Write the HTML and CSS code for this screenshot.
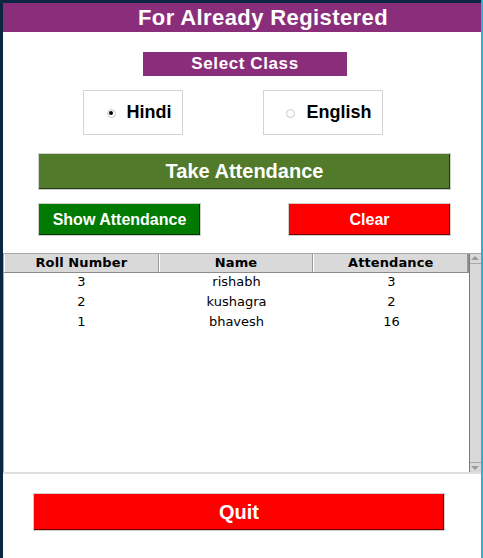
FILE: index.html
```html
<!DOCTYPE html>
<html>
<head>
<meta charset="utf-8">
<link rel="stylesheet" href="styles.css">
</head>
<body>
<div class="window">
  <div class="title">For Already Registered</div>
  <div class="select-class">Select Class</div>
  <div class="radio-row">
    <label class="radio-box hindi"><span class="radio checked"></span><span class="radio-text">Hindi</span></label>
    <label class="radio-box english"><span class="radio"></span><span class="radio-text">English</span></label>
  </div>
  <div class="btn take">Take Attendance</div>
  <div class="btn-row">
    <div class="btn show">Show Attendance</div>
    <div class="btn clear">Clear</div>
  </div>
  <div class="tree">
    <div class="tree-main">
      <div class="thead">
        <div class="th">Roll Number</div>
        <div class="th">Name</div>
        <div class="th">Attendance</div>
      </div>
      <div class="tr"><div class="td">3</div><div class="td">rishabh</div><div class="td">3</div></div>
      <div class="tr"><div class="td">2</div><div class="td">kushagra</div><div class="td">2</div></div>
      <div class="tr"><div class="td">1</div><div class="td">bhavesh</div><div class="td">16</div></div>
    </div>
    <div class="scrollbar">
      <div class="arrow up"></div>
      <div class="trough"></div>
      <div class="arrow down"></div>
    </div>
  </div>
  <div class="btn quit">Quit</div>
</div>
</body>
</html>
```

FILE: styles.css
```css
html, body {
  margin: 0;
  padding: 0;
}
body {
  width: 483px;
  height: 558px;
  overflow: hidden;
  background: linear-gradient(to right, #0c2540 0, #0c2540 481px, #22b5d5 481px, #22b5d5 483px);
  font-family: "Liberation Sans", Arial, sans-serif;
}
.window {
  margin: 3px 0 0 3px;
  width: 478px;
  height: 555px;
  background: #ffffff;
  display: flex;
  flex-direction: column;
}
.title {
  height: 29px;
  background: #8a2e7b;
  color: #ffffff;
  font-weight: bold;
  font-size: 22px;
  letter-spacing: 0.4px;
  line-height: 29px;
  text-align: center;
  padding-left: 42px;
}
.select-class {
  margin: 20px 0 0 140px;
  width: 204px;
  height: 24px;
  background: #8a2e7b;
  color: #ffffff;
  font-weight: bold;
  font-size: 17px;
  letter-spacing: 0.6px;
  line-height: 24px;
  text-align: center;
}
.radio-row {
  margin: 14px 0 0 80px;
  display: flex;
  gap: 80px;
}
.radio-box {
  box-sizing: border-box;
  height: 45px;
  border: 1px solid #d4d4d4;
  display: flex;
  align-items: center;
  justify-content: center;
  gap: 11px;
}
.hindi { width: 100px; padding-left: 12px; }
.english { width: 120px; padding-left: 12px; }
.radio {
  box-sizing: border-box;
  width: 9px;
  height: 9px;
  border-radius: 50%;
  border: 1px solid #c8c8c8;
  background: #fff;
  position: relative;
  margin-top: 1px;
  flex: none;
}
.radio.checked::after {
  content: "";
  position: absolute;
  left: 1.5px;
  top: 1.5px;
  width: 4px;
  height: 4px;
  border-radius: 50%;
  background: #000;
}
.radio-text {
  font-weight: bold;
  font-size: 18px;
  color: #000;
}
.btn {
  box-sizing: border-box;
  border: 1px solid #cfcfcf;
  box-shadow: inset -1px -1px 0 rgba(0, 0, 0, 0.55);
  color: #ffffff;
  font-weight: bold;
  text-align: center;
}
.take {
  margin: 18px 0 0 35px;
  width: 413px;
  height: 37px;
  background: #517a2b;
  font-size: 20px;
  line-height: 35px;
}
.btn-row {
  margin: 13px 0 0 35px;
  width: 413px;
  display: flex;
  justify-content: space-between;
}
.show, .clear {
  width: 163px;
  height: 33px;
  font-size: 16px;
  line-height: 31px;
}
.show { background: #007a00; }
.clear { background: #ff0000; }
.tree {
  margin-top: 17px;
  height: 221px;
  display: flex;
  border-top: 1px solid #a8a8a8;
  border-bottom: 2px solid #e0e0e0;
  box-sizing: border-box;
}
.tree-main {
  flex: 1;
  border-left: 1px solid #a8a8a8;
  font-family: "DejaVu Sans", sans-serif;
  font-size: 13px;
}
.thead {
  display: flex;
  height: 18px;
  background: #d9d9d9;
  border-bottom: 1px solid #8c8c8c;
  border-right: 1px solid #8c8c8c;
}
.th {
  flex: 1;
  font-weight: bold;
  text-align: center;
  line-height: 18px;
  letter-spacing: 0.1px;
  border-left: 1px solid #ffffff;
  border-right: 1px solid #9a9a9a;
  color: #000;
}
.tr {
  display: flex;
  height: 20px;
  line-height: 18px;
}
.tr:first-of-type {
  margin-top: 0;
}
.td {
  flex: 1;
  text-align: center;
  color: #000;
}
.scrollbar {
  width: 11px;
  background: #d9d9d9;
  border-left: 1px solid #7a7a7a;
  display: flex;
  flex-direction: column;
}
.arrow {
  height: 10px;
  position: relative;
  border-bottom: 1px solid #a8a8a8;
  box-sizing: border-box;
}
.arrow.down {
  border-bottom: none;
  border-top: 1px solid #a8a8a8;
}
.arrow::after {
  content: "";
  position: absolute;
  left: 1px;
  width: 0;
  height: 0;
  border-left: 4px solid transparent;
  border-right: 4px solid transparent;
}
.arrow.up::after {
  top: 2px;
  border-bottom: 4px solid #9a9a9a;
}
.arrow.down::after {
  top: 3px;
  border-top: 4px solid #9a9a9a;
}
.trough {
  flex: 1;
}
.quit {
  margin: 19px 0 0 30px;
  width: 412px;
  height: 38px;
  background: #ff0000;
  font-size: 20px;
  line-height: 36px;
}
```
